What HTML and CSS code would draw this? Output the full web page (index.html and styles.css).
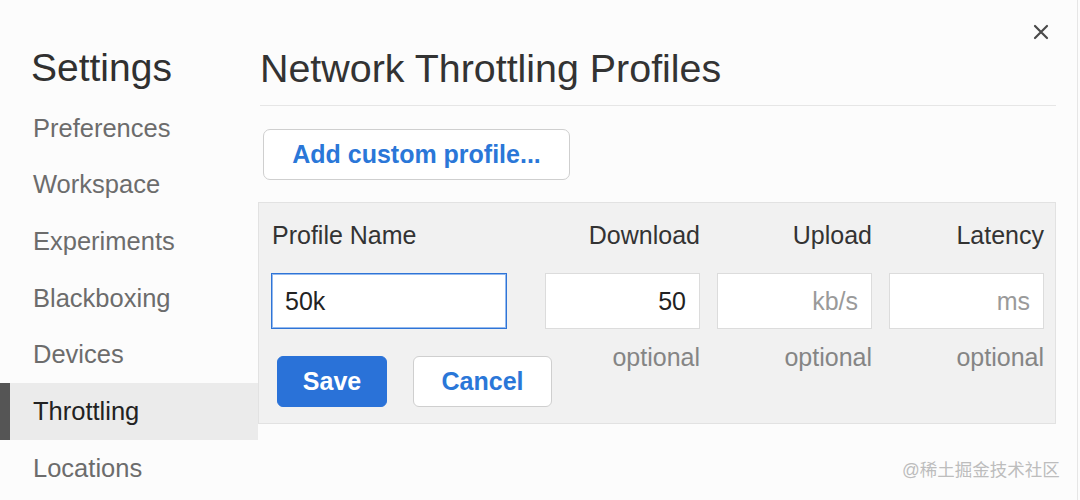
FILE: index.html
```html
<!DOCTYPE html>
<html lang="en">
<head>
<meta charset="utf-8">
<title>Settings - Throttling</title>
<link rel="stylesheet" href="styles.css">
</head>
<body>
<div class="app">
  <aside class="sidebar">
    <h1 class="side-title">Settings</h1>
    <nav class="nav">
      <div class="nav-item">Preferences</div>
      <div class="nav-item">Workspace</div>
      <div class="nav-item">Experiments</div>
      <div class="nav-item">Blackboxing</div>
      <div class="nav-item">Devices</div>
      <div class="nav-item active">Throttling</div>
      <div class="nav-item">Locations</div>
    </nav>
  </aside>
  <main class="main">
    <div class="header">
      <h2 class="title">Network Throttling Profiles</h2>
    </div>
    <button class="add-btn">Add custom profile...</button>
    <div class="panel">
      <div class="label left">Profile Name</div>
      <div class="label">Download</div>
      <div class="label">Upload</div>
      <div class="label">Latency</div>

      <div class="field focus left">50k</div>
      <div class="field">50</div>
      <div class="field placeholder">kb/s</div>
      <div class="field placeholder">ms</div>

      <div class="actions">
        <button class="btn primary">Save</button>
        <button class="btn secondary">Cancel</button>
      </div>
      <div class="hint">optional</div>
      <div class="hint">optional</div>
      <div class="hint">optional</div>
    </div>
  </main>
  <div class="edge"></div>
</div>
<button class="close" aria-label="Close">
  <svg width="16" height="16" viewBox="0 0 16 16"><path d="M2 2 L14 14 M14 2 L2 14" stroke="#4a4a4a" stroke-width="2.2" stroke-linecap="round" fill="none"/></svg>
</button>
<div class="watermark">@稀土掘金技术社区</div>
</body>
</html>
```
FILE: styles.css
```css
* { box-sizing: border-box; }
html, body {
  margin: 0;
  padding: 0;
  width: 1080px;
  height: 500px;
  overflow: hidden;
  background: #fcfcfc;
  font-family: "Liberation Sans", Arial, Helvetica, sans-serif;
  color: #333;
}
.app {
  display: flex;
  height: 500px;
}
.sidebar {
  width: 258px;
  flex: none;
}
.side-title {
  margin: 45px 0 0 0;
  padding-left: 31px;
  font-size: 39px;
  line-height: 46px;
  font-weight: normal;
  color: #303030;
}
.nav {
  margin-top: 9px;
  display: flex;
  flex-direction: column;
}
.nav-item {
  height: 56.67px;
  display: flex;
  align-items: center;
  padding-left: 33px;
  font-size: 25.5px;
  color: #6c6c6c;
}
.nav-item.active {
  background: #ebebeb;
  border-left: 10px solid #555;
  padding-left: 23px;
  color: #222;
}
.main {
  flex: 1;
  padding-right: 21px;
  display: flex;
  flex-direction: column;
  align-items: flex-start;
}
.header {
  margin-top: 45px;
  margin-left: 2px;
  align-self: stretch;
  border-bottom: 1px solid #e6e6e6;
  padding-bottom: 14px;
}
.title {
  margin: 0;
  font-size: 39.4px;
  line-height: 46px;
  font-weight: normal;
  color: #333;
}
.add-btn {
  margin-top: 23px;
  margin-left: 5px;
  width: 307px;
  height: 51px;
  background: #fff;
  border: 1px solid #cfcfcf;
  border-radius: 7px;
  font-family: inherit;
  font-size: 25px;
  font-weight: bold;
  color: #2a77d8;
  padding: 0;
}
.panel {
  margin-top: 22px;
  align-self: stretch;
  background: #f1f1f1;
  border: 1px solid #e2e2e2;
  padding: 17px 11px 16px 12px;
  display: grid;
  grid-template-columns: 257px 155px 155px 155px;
  grid-template-rows: 53px 56px auto;
  column-gap: 17px;
}
.panel > .left { margin-right: 21px; }
.label {
  font-size: 25px;
  line-height: 30px;
  text-align: right;
  color: #333;
  margin-bottom: 23px;
}
.label.left {
  text-align: left;
  padding-left: 1px;
}
.field {
  height: 56px;
  background: #fff;
  border: 1px solid #dcdcdc;
  font-size: 25px;
  line-height: 54px;
  text-align: right;
  padding: 0 13px;
  color: #222;
}
.field.focus {
  text-align: left;
  border: 1px solid #2f74d6;
  box-shadow: 0 0 0 1px rgba(60, 130, 225, 0.55) inset;
  color: #222;
}
.field.placeholder { color: #9a9a9a; }
.actions {
  margin-top: 27px;
  margin-left: 6px;
  display: flex;
  gap: 26px;
}
.btn {
  flex: none;
  height: 51px;
  border-radius: 6px;
  font-family: inherit;
  font-size: 25px;
  font-weight: bold;
  padding: 0;
}
.btn.primary {
  width: 110px;
  background: #2a72d8;
  border: 1px solid #2a72d8;
  color: #fff;
}
.btn.secondary {
  width: 139px;
  background: #fff;
  border: 1px solid #cfcfcf;
  color: #2a77d8;
}
.hint {
  margin-top: 13px;
  font-size: 25px;
  line-height: 30px;
  text-align: right;
  color: #858585;
}
.edge {
  width: 1px;
  flex: none;
  margin-right: 2px;
  background: #e6e6e6;
}
.close {
  position: absolute;
  top: 24px;
  left: 1033px;
  width: 16px;
  height: 16px;
  padding: 0;
  border: 0;
  background: none;
}
.close svg { display: block; }
.watermark {
  position: absolute;
  left: 902px;
  top: 459px;
  font-family: "Liberation Sans", "Noto Sans CJK SC", sans-serif;
  font-size: 17.5px;
  line-height: 22px;
  color: #bdbdbd;
}
```
